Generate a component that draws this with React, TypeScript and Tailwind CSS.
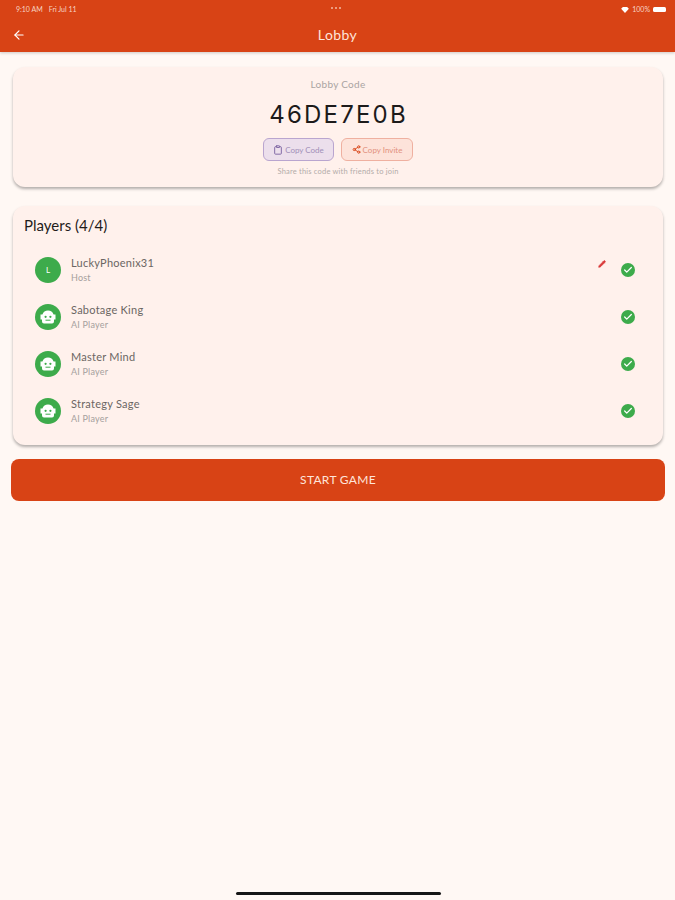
import { ArrowLeft, Clipboard, Share2, Pencil, Check } from "lucide-react";

type Player = { name: string; role: string; initial?: string; editable?: boolean };

const players: Player[] = [
  { name: "LuckyPhoenix31", role: "Host", initial: "L", editable: true },
  { name: "Sabotage King", role: "AI Player" },
  { name: "Master Mind", role: "AI Player" },
  { name: "Strategy Sage", role: "AI Player" },
];

function StatusBar() {
  return (
    <div className="h-4 relative flex items-center justify-between pl-[16px] pr-[9px] text-[7px] leading-none text-[#f7d3c4]">
      <div className="flex gap-[6px] pt-[3px]">
        <span>9:10 AM</span>
        <span>Fri Jul 11</span>
      </div>
      <div className="absolute left-[331px] top-[7px] flex gap-[2px]">
        <span className="w-[2px] h-[2px] rounded-full bg-[#f3b9a2]" />
        <span className="w-[2px] h-[2px] rounded-full bg-[#f3b9a2]" />
        <span className="w-[2px] h-[2px] rounded-full bg-[#f3b9a2]" />
      </div>
      <div className="flex items-center gap-[3px] pt-[3px]">
        <svg width="8" height="6" viewBox="0 0 9 7">
          <path d="M0 2 L2 0 H7 L9 2 L4.5 7 Z" fill="#fff" />
        </svg>
        <span>100%</span>
        <span className="w-[13px] h-[5px] rounded-[1.5px] bg-white" />
      </div>
    </div>
  );
}

function RobotIcon() {
  return (
    <svg width="16" height="14" viewBox="0 0 16 14">
      <path d="M8 0.5A6 6 0 0 1 13.6 4.5H15.5V9.5H14V11.5A2 2 0 0 1 12 13.5H4A2 2 0 0 1 2 11.5V9.5H.5V4.5H2.4A6 6 0 0 1 8 .5Z" fill="#fff" />
      <circle cx="5.6" cy="6.8" r="1.1" fill="#3dab4b" />
      <circle cx="10.4" cy="6.8" r="1.1" fill="#3dab4b" />
      <path d="M5.5 10.2h5" stroke="#3dab4b" strokeWidth="1" />
    </svg>
  );
}

function PlayerRow({ player }: { player: Player }) {
  return (
    <div className="h-[47px] flex items-center pl-[22px] pr-[28px]">
      <div className="w-[26px] h-[26px] rounded-full bg-[#3dab4b] flex items-center justify-center text-white text-[8px] shrink-0">
        {player.initial ? player.initial : <RobotIcon />}
      </div>
      <div className="ml-[10px] flex-1 -mt-px">
        <div className="text-[11px] leading-[15px] tracking-[0.25px] text-[#6b6663]">{player.name}</div>
        <div className="text-[9px] leading-[13px] mt-px tracking-[0.2px] text-[#a5a09d]">{player.role}</div>
      </div>
      {player.editable && (
        <Pencil size={8} fill="#d93a3a" stroke="#d93a3a" className="mr-[15px] -mt-[12px]" />
      )}
      <div className="w-[14px] h-[14px] rounded-full bg-[#3dab4b] flex items-center justify-center">
        <Check size={10} stroke="#fff" strokeWidth={3} />
      </div>
    </div>
  );
}

export default function App() {
  return (
    <div className="relative w-[675px] h-[900px] bg-[#fff8f4] overflow-hidden font-['Lato','Noto_Sans',sans-serif]">
      <header className="h-[52px] bg-[#d84315] shadow-[0_1px_3px_rgba(0,0,0,0.2)]">
        <StatusBar />
        <div className="h-9 relative flex items-center justify-center">
          <ArrowLeft size={14} stroke="#fff" strokeWidth={2} className="absolute left-[12px] top-[12px]" />
          <span className="text-[14px] tracking-[0.4px] text-[#ffe5da]">Lobby</span>
        </div>
      </header>

      <main className="pt-[15px] flex flex-col">
        <section className="ml-[13px] mr-[12px] h-[120px] rounded-xl bg-[#fff1ec] shadow-[0_2px_3px_rgba(0,0,0,0.3)] flex flex-col items-center pt-[11px]">
          <div className="text-[10px] leading-[13px] tracking-[0.3px] text-[#aaa4a2]">Lobby Code</div>
          <div className="mt-[9px] pl-px text-[24px] leading-[30px] tracking-[2.2px] text-[#1c1a1a] font-['Inter',sans-serif]">
            46DE7E0B
          </div>
          <div className="mt-[8px] flex gap-[7px]">
            <button className="w-[71px] h-[23px] rounded-md bg-[#ecdfec] border border-[#b9a5cf] flex items-center justify-center gap-[2px] text-[8px] text-[#a08fb8]">
              <Clipboard size={10} stroke="#7a60a0" strokeWidth={2.2} />
              Copy Code
            </button>
            <button className="w-[72px] h-[23px] rounded-md bg-[#fde3da] border border-[#efb0a0] flex items-center justify-center gap-[2px] text-[8px] text-[#e2917e]">
              <Share2 size={9} stroke="#d84315" strokeWidth={2.4} />
              Copy Invite
            </button>
          </div>
          <div className="mt-[5px] text-[7.5px] leading-[11px] tracking-[0.2px] text-[#b3aca9]">
            Share this code with friends to join
          </div>
        </section>

        <section className="ml-[13px] mr-[12px] mt-[19px] h-[239px] rounded-xl bg-[#fff1ec] shadow-[0_2px_3px_rgba(0,0,0,0.3)]">
          <h2 className="pl-[11px] pt-[10px] h-[40px] text-[15px] leading-[19px] text-[#1f1c1b]">Players (4/4)</h2>
          {players.map((p) => (
            <PlayerRow key={p.name} player={p} />
          ))}
        </section>

        <button className="ml-[11px] mr-[10px] mt-[14px] h-[42px] rounded-lg bg-[#d84315] text-[12px] tracking-[0.3px] text-[#ffe5da]">
          START GAME
        </button>
      </main>

      <div className="absolute left-[236px] top-[892px] w-[205px] h-[3px] rounded-full bg-[#161616]" />
    </div>
  );
}
